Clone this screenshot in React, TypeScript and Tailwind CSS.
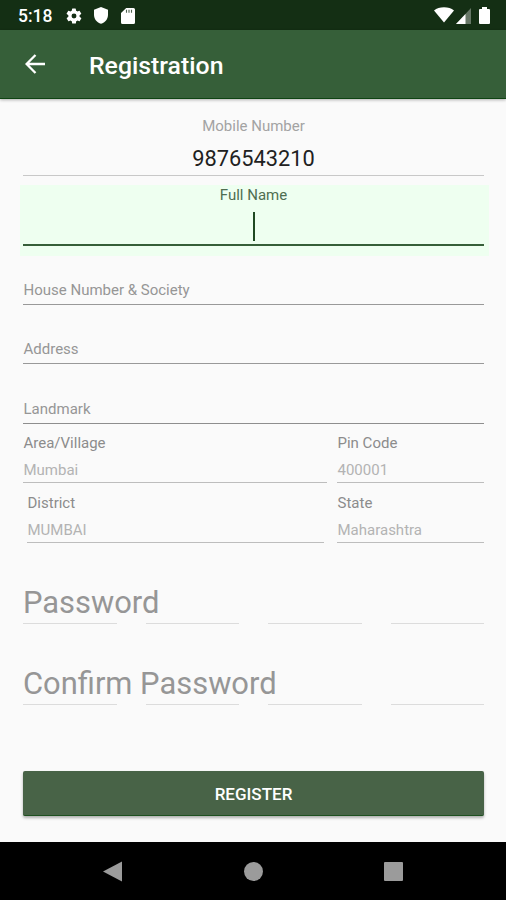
import React from "react";

const StatusBar = () => (
  <div className="flex h-[30px] items-center justify-between bg-[#142f14] pl-[18px] pr-4 text-white">
    <div className="flex items-center">
      <span className="w-[35px] text-[17.5px] font-medium leading-5 pt-[2px]">5:18</span>
      <svg className="ml-[12px] mt-[1px] size-[18px]" viewBox="0 0 24 24" fill="currentColor">
        <path d="M19.4 13a7.6 7.6 0 0 0 0-2l2.1-1.6a.5.5 0 0 0 .1-.7l-2-3.4a.5.5 0 0 0-.6-.2l-2.5 1a7.3 7.3 0 0 0-1.7-1l-.4-2.6a.5.5 0 0 0-.5-.5h-4a.5.5 0 0 0-.5.5L9 5.1a7.3 7.3 0 0 0-1.7 1l-2.5-1a.5.5 0 0 0-.6.2l-2 3.4a.5.5 0 0 0 .1.7L4.5 11a7.6 7.6 0 0 0 0 2l-2.1 1.6a.5.5 0 0 0-.1.7l2 3.4c.1.2.4.3.6.2l2.5-1a7.3 7.3 0 0 0 1.7 1l.4 2.6c0 .3.2.5.5.5h4c.3 0 .5-.2.5-.5l.4-2.6a7.3 7.3 0 0 0 1.7-1l2.5 1c.2.1.5 0 .6-.2l2-3.4a.5.5 0 0 0-.1-.7zM12 15.3a3.3 3.3 0 1 1 0-6.6 3.3 3.3 0 0 1 0 6.6z" />
      </svg>
      <svg className="ml-[11px] mt-[1px] h-[17px] w-[14px]" viewBox="0 0 14 17" fill="currentColor">
        <path d="M7 0 0 2.7v5c0 4.3 2.9 7.7 7 9.1 4.1-1.4 7-4.8 7-9.1v-5z" />
      </svg>
      <svg className="ml-[13px] mt-px h-4 w-[14px]" viewBox="0 0 14 16" fill="currentColor">
        <path d="M5.2 0H12.5A1.5 1.5 0 0 1 14 1.5v13a1.5 1.5 0 0 1-1.5 1.5h-11A1.5 1.5 0 0 1 0 14.5V5z" />
        <path d="M5.5 1.8v3M8 1.8v3M10.5 1.8v3" stroke="#142f14" strokeWidth="1.1" opacity=".75" />
      </svg>
    </div>
    <div className="flex items-center">
      <svg className="h-4 w-5" viewBox="0 0 20 16" fill="currentColor">
        <path d="M10 15.5 0 3.5C2.6 1.4 6 .3 10 .3s7.4 1.1 10 3.2z" />
      </svg>
      <svg className="ml-[2px] mt-px h-4 w-[15px]" viewBox="0 0 15 16" fill="currentColor">
        <path d="M0 16 15 0v16z" opacity=".35" />
        <path d="M0 16 9.5 5.9V16z" />
      </svg>
      <svg className="ml-2 h-[17px] w-[11px]" viewBox="0 0 11 17" fill="currentColor">
        <path d="M3 0h5v2h2a1 1 0 0 1 1 1v13a1 1 0 0 1-1 1H1a1 1 0 0 1-1-1V3a1 1 0 0 1 1-1h2z" />
      </svg>
    </div>
  </div>
);

const AppBar = () => (
  <header className="relative flex h-[69px] items-center border-b border-[#0f4413] bg-[#365f39] pl-[25px] text-white shadow-[0_1px_3px_rgba(0,0,0,0.3)]">
    <svg className="-mt-px size-5" viewBox="0 0 20 20" fill="none" stroke="currentColor" strokeWidth="2.3">
      <path d="M20 10H2M10.5 1 1.6 10l8.9 9" />
    </svg>
    <h1 className="ml-11 pt-[3px] text-[24.8px] font-medium leading-8">Registration</h1>
  </header>
);

// collapsed field, the label sits on the line
const EmptyField = ({ label, last }: { label: string; last?: boolean }) => (
  <div
    className={
      last
        ? "flex h-[60px] items-end border-b border-[#8e8e8e] pb-[4px]"
        : "flex h-[59px] items-end border-b border-[#999999] pb-[4px]"
    }
  >
    <label className="pl-[0.5px] text-[15px] leading-5 text-[#969696]">{label}</label>
  </div>
);

const FilledField = ({ label, value }: { label: string; value: string }) => (
  <div className="flex h-full flex-col justify-end border-b border-[#bdbdbd] pb-[2px] pl-[0.5px]">
    <label className="text-[15px] leading-5 text-[#8c8c8c]">{label}</label>
    <span className="mt-[7px] text-[15px] leading-5 text-[#b3b3b3]">{value}</span>
  </div>
);

const PinField = ({ label }: { label: string }) => (
  <div className="flex h-[81px] flex-col justify-end">
    <label className="whitespace-nowrap text-[30.9px] leading-9 text-[#969696]">{label}</label>
    <div className="mt-[2px] grid grid-cols-4 gap-[29px]">
      {[0, 1, 2, 3].map((i) => (
        <span key={i} className="h-px bg-[#dcdcdc]" />
      ))}
    </div>
  </div>
);

export default function App() {
  return (
    <div className="flex h-[900px] w-[506px] flex-col overflow-hidden bg-[#fafafa] font-['Roboto',sans-serif]">
      <StatusBar />
      <AppBar />
      <main className="flex flex-1 flex-col px-[23px]">
        <div className="mr-[-1px] flex flex-col">
          <div className="flex h-[77px] flex-col items-center border-b border-[#c8c8c8] pt-[17px]">
            <label className="text-[15px] leading-5 text-[#a3a3a3]">Mobile Number</label>
            <span className="mt-[9px] text-[21.8px] leading-7 text-[#212121]">9876543210</span>
          </div>

          <div className="-ml-[3px] -mr-[5px] mt-[9px] h-[71px] bg-[#eefff0] pl-[3px] pr-[5px]">
            <div className="flex h-[61px] flex-col items-center border-b-2 border-[#365f39]">
              <label className="text-[15px] leading-5 text-[#4f6e51]">Full Name</label>
              <span className="ml-px mt-[7px] h-[29px] w-[2px] bg-[#1f4a22]" />
            </div>
          </div>

          <div className="-mt-[10px] flex flex-col">
            <EmptyField label="House Number & Society" />
            <EmptyField label="Address" />
            <EmptyField label="Landmark" last />
          </div>

          <div className="grid h-[59px] grid-cols-[304px_147px] gap-[10px]">
            <FilledField label="Area/Village" value="Mumbai" />
            <FilledField label="Pin Code" value="400001" />
          </div>
          <div className="grid h-[60px] grid-cols-[297px_147px] gap-[13px] pl-1">
            <FilledField label="District" value="MUMBAI" />
            <FilledField label="State" value="Maharashtra" />
          </div>

          <PinField label="Password" />
          <PinField label="Confirm Password" />

          <button className="mt-[66px] h-[45px] rounded-[2px] border-b border-[#1d501f] bg-[#486347] pt-[3px] text-[17px] font-medium text-white shadow-[0_2px_3px_rgba(0,0,0,0.3)]">
            REGISTER
          </button>
        </div>
      </main>
      <nav className="flex h-[58px] items-center bg-black pl-[103px] text-[#9b9b9b]">
        <svg className="h-[21px] w-[19px]" viewBox="0 0 19 21" fill="currentColor">
          <path d="M19 .5v20L0 10.5z" />
        </svg>
        <span className="ml-[122px] size-[19px] rounded-full bg-[#9b9b9b]" />
        <span className="ml-[121px] size-[19px] rounded-[1px] bg-[#9b9b9b]" />
      </nav>
    </div>
  );
}
